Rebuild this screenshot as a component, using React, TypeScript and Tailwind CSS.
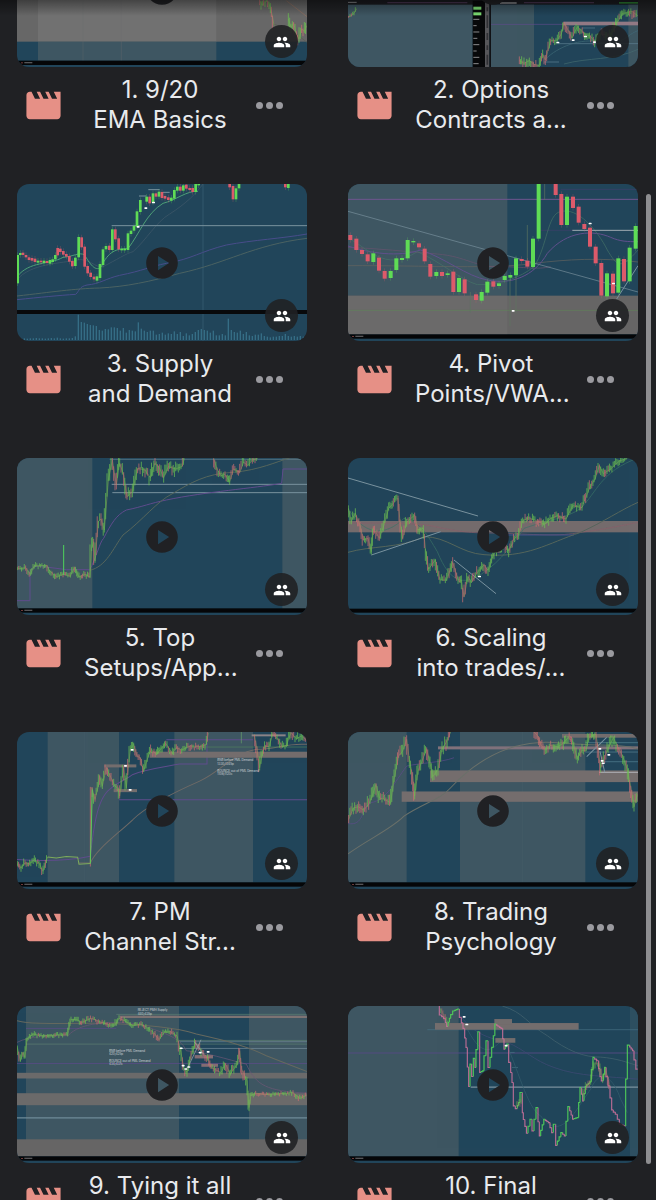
import type { ReactNode } from "react";
import { MdMovie, MdPeople, MdPlayCircle } from "react-icons/md";

const UP = "#5fdc55";
const DOWN = "#dc5a6a";
const SLATE = "#3e5662";
const GRAY = "#6b6a6a";
const ZONE = "#746d6d";
const PURPLE = "#5f4c8c";
const OLIVE = "#56665c";
const PALE = "#7a929e";

type Point = [number, number];
// x, top, bottom, direction
type Candle = [number, number, number, "u" | "d"];

const Box = ({ x, y, w, h, fill = SLATE, o = 1 }: { x: number; y: number; w: number; h: number; fill?: string; o?: number }) => (
  <rect x={x} y={y} width={w} height={h} fill={fill} opacity={o} />
);

const Curve = ({ d, c = OLIVE, w = 2 }: { d: string; c?: string; w?: number }) => (
  <path d={d} fill="none" stroke={c} strokeWidth={w} />
);

const Candles = ({ data, width }: { data: Candle[]; width: number }) => (
  <g>
    {data.map(([x, top, bottom, dir]) => (
      <g key={x} fill={dir === "u" ? UP : DOWN}>
        <rect x={x - 1} y={top - 8} width={2} height={bottom - top + 16} opacity={0.35} />
        <rect x={x - width / 2} y={top} width={width} height={bottom - top} />
      </g>
    ))}
  </g>
);

// Dense price action: short bars scattered around a polyline
const Price = ({ points, amp = 10, step = 4, o = 0.85 }: { points: Point[]; amp?: number; step?: number; o?: number }) => {
  let seed = points[0][0] * 7 + 13;
  const rand = () => {
    seed = (seed * 9301 + 49297) % 233280;
    return seed / 233280;
  };
  let up = "";
  let down = "";
  for (let i = 1; i < points.length; i++) {
    const [x0, y0] = points[i - 1];
    const [x1, y1] = points[i];
    const n = Math.max(1, Math.round((x1 - x0) / step));
    for (let k = 0; k < n; k++) {
      const x = x0 + ((x1 - x0) * k) / n;
      const a = y0 + ((y1 - y0) * k) / n;
      const b = y0 + ((y1 - y0) * (k + 1)) / n;
      const j = (rand() - 0.5) * amp;
      const top = Math.min(a, b) + j - amp * (0.3 + rand() * 0.5);
      const bottom = Math.max(a, b) + j + amp * (0.3 + rand() * 0.5);
      const bar = `M${x.toFixed(1)} ${top.toFixed(1)}V${bottom.toFixed(1)}`;
      if (rand() < (b <= a ? 0.78 : 0.4)) up += bar;
      else down += bar;
    }
  }
  const line = points.map((p) => p.join(" ")).join("L");
  return (
    <g fill="none" opacity={o}>
      <path d={`M${line}`} stroke="#8aa557" strokeWidth={2} />
      <path d={down} stroke="#cf6f72" strokeWidth={2.5} />
      <path d={up} stroke="#6cc552" strokeWidth={2.5} />
    </g>
  );
};

// Stair-stepped price line, green on the way up and pink on the way down
const Steps = ({ points }: { points: Point[] }) => {
  let up = "";
  let down = "";
  for (let i = 1; i < points.length; i++) {
    const [x0, y0] = points[i - 1];
    const [x1, y1] = points[i];
    const n = Math.max(1, Math.round((x1 - x0) / 5));
    for (let k = 0; k < n; k++) {
      const xa = x0 + ((x1 - x0) * k) / n;
      const xb = x0 + ((x1 - x0) * (k + 1)) / n;
      const ya = y0 + ((y1 - y0) * k) / n;
      const yb = y0 + ((y1 - y0) * (k + 1)) / n;
      const piece = `M${xa} ${ya}V${yb}H${xb}`;
      if (yb < ya) up += piece;
      else down += piece;
    }
  }
  return (
    <g fill="none" strokeWidth={3.5} opacity={0.9}>
      <path d={down} stroke="#c8709a" />
      <path d={up} stroke="#52d458" />
    </g>
  );
};

const Marks = ({ at }: { at: Point[] }) => (
  <g fill="#ffffff">
    {at.map(([x, y]) => (
      <rect key={`${x}-${y}`} x={x - 5} y={y - 3} width={9} height={5} rx={2} />
    ))}
  </g>
);

// Black time axis at the foot of a chart
const Axis = ({ x, y }: { x: number; y: number }) => (
  <g>
    <rect x={x} y={y} width={870} height={13} fill="#050608" />
    <rect x={x + 12} y={y + 5} width={6} height={3} fill="#6d3a3a" />
    <rect x={x + 22} y={y + 4} width={24} height={4} fill="#77777a" opacity={0.7} />
  </g>
);

const Note = ({ x, y, lines }: { x: number; y: number; lines: string[] }) => (
  <text x={x} y={y} fill="#e8eaed" fontSize={9} opacity={0.8}>
    {lines.map((line, i) => (
      <tspan key={line} x={x} dy={i === 0 ? 0 : 10}>
        {line}
      </tspan>
    ))}
  </text>
);

const Chart = ({ box, children }: { box: string; children: ReactNode }) => (
  <svg viewBox={box} preserveAspectRatio="none" className="block size-full bg-[#21455a]" aria-hidden="true">
    {children}
  </svg>
);

const EmaChart = () => (
  <Chart box="52 -272 870 471">
    <Box x={52} y={-272} w={870} h={395} fill="#676767" />
    <Box x={115} y={-272} w={535} h={395} fill="#717171" />
    <Box x={115} y={123} w={535} h={57} />
    <Curve d="M250 0V180M365 0V180" c="#6b6e6f" w={1} />
    <Curve d="M860 0L922 48" c="#94705f" />
    <Curve d="M820 70C850 80 880 90 922 125" c="#5b5f52" />
    <Price points={[[780, 0], [788, 14], [796, 5], [804, 0], [812, 20], [818, 45], [823, 75]]} amp={14} />
    <Price points={[[866, 55], [874, 80], [882, 68], [890, 100], [898, 115], [906, 85], [914, 92], [921, 75]]} amp={22} />
    <Axis x={52} y={180} />
  </Chart>
);

const OptionsChart = () => (
  <Chart box="62 -272 870 471">
    <Box x={62} y={-272} w={374} h={471} />
    <Box x={62} y={-272} w={870} h={284} fill="#1a1b20" />
    <Curve d="M62 5H88" c="#88898c" w={3} />
    <Curve d="M180 6H420M590 6H800" c="#47344f" w={4} />
    <Curve d="M518 7H568" c="#c9cacc" w={3} />
    <Price points={[[64, 48], [72, 46], [80, 38], [88, 24]]} amp={6} />
    <Box x={436} y={0} w={37} h={199} fill="#07080a" />
    <Box x={438} y={18} w={24} h={9} fill="#7bdc72" />
    <Box x={438} y={35} w={24} h={9} fill="#7bdc72" />
    <Curve d="M438 56H456M438 75H448M438 94H456M438 113H450M438 132H456M438 151H448M438 170H456M438 189H454" c="#8a8a8c" w={3} />
    <Box x={473} y={0} w={13} h={199} fill="#56565a" />
    <Curve d="M480 20V32M480 44V82M480 97V118M480 134V148M480 162V192" c="#303035" w={5} />
    <Box x={486} y={0} w={5} h={199} fill="#111216" />
    <Box x={491} y={12} w={129} h={187} />
    <Box x={903} y={12} w={29} h={187} />
    <Box x={875} y={4} w={57} h={5} fill="#2a7a31" />
    <Curve d="M491 71H932" c={PURPLE} />
    <Box x={708} y={63} w={224} h={11} fill="#927984" />
    <Curve d="M690 129H932M650 184H695M765 82H803" c="#5f8494" />
    <Curve d="M655 175C690 140 760 110 820 125S900 100 932 90" c="#426c79" />
    <Curve d="M710 190C780 170 860 180 932 146" c="#476c70" />
    <Price points={[[576, 180], [590, 188], [606, 180], [622, 192], [636, 194], [646, 160], [654, 178], [670, 120], [690, 118], [702, 100], [710, 68], [722, 88], [734, 112], [750, 78], [772, 100], [790, 108], [802, 122], [822, 100], [850, 105], [868, 68], [886, 38], [900, 36], [914, 32], [931, 45]]} amp={16} />
    <Marks at={[[692, 126], [738, 119], [775, 108], [802, 125]]} />
  </Chart>
);

const supplyCandles: Candle[] = [
  [54, 255, 340, "u"], [62, 249, 255, "u"], [70, 248, 255, "d"], [79, 255, 262, "d"], [88, 262, 270, "d"], [97, 264, 272, "d"],
  [106, 266, 276, "d"], [115, 272, 278, "u"], [124, 272, 277, "d"], [133, 272, 279, "u"], [142, 273, 279, "d"], [151, 270, 281, "u"],
  [159, 268, 276, "u"], [167, 255, 268, "u"], [174, 234, 256, "d"], [182, 236, 246, "d"], [191, 243, 254, "d"], [200, 252, 260, "d"],
  [209, 258, 275, "d"], [218, 273, 289, "d"], [227, 263, 288, "u"], [237, 201, 262, "u"], [246, 202, 232, "d"], [255, 230, 290, "d"],
  [264, 288, 310, "d"], [273, 308, 321, "d"], [283, 320, 328, "d"], [292, 319, 332, "u"], [301, 282, 324, "u"], [310, 238, 285, "u"],
  [319, 228, 238, "u"], [329, 227, 240, "d"], [338, 178, 240, "u"], [347, 178, 208, "d"], [357, 205, 238, "d"], [366, 236, 241, "u"],
  [375, 236, 241, "u"], [385, 190, 240, "u"], [394, 182, 192, "u"], [403, 168, 182, "u"], [412, 124, 170, "u"], [422, 90, 126, "u"],
  [441, 80, 95, "u"], [450, 80, 100, "d"], [460, 70, 98, "u"], [469, 70, 80, "d"], [478, 65, 80, "u"], [487, 66, 84, "d"],
  [496, 78, 86, "d"], [506, 82, 90, "d"], [515, 83, 92, "u"], [524, 60, 86, "u"], [533, 50, 62, "u"], [542, 50, 62, "d"],
  [551, 46, 62, "u"], [560, 44, 56, "d"], [570, 54, 60, "d"], [579, 54, 66, "d"], [588, 42, 66, "u"], [597, 40, 46, "u"],
  [690, 42, 52, "d"], [700, 48, 88, "d"], [709, 55, 88, "u"], [718, 40, 55, "u"], [857, 40, 52, "d"], [866, 42, 54, "u"],
];

const volumes = [
  4, 4, 5, 4, 5, 5, 6, 5, 5, 4, 5, 6, 5, 7, 5, 4, 5, 5, 6, 11, 76, 54, 52, 48, 45, 44, 42, 30, 28, 33, 32, 38, 38, 36, 28, 36, 22,
  30, 28, 26, 53, 34, 28, 24, 28, 28, 16, 18, 22, 16, 20, 18, 26, 18, 24, 12, 20, 14, 18, 24, 30, 33, 30, 28, 22, 28, 14, 14, 18,
  14, 64, 30, 24, 22, 28, 18, 24, 14, 12, 16, 16, 20, 12, 10, 8, 10, 10, 12, 12, 18, 12, 10, 12, 10, 12, 10,
];

const SupplyChart = () => (
  <Chart box="52 42 870 471">
    <Curve d="M610 42V512" c="#3b6277" />
    <g fill="#356d85">
      {volumes.map((v, i) => (
        <rect key={i} x={54 + i * 9} y={510 - v} width={4} height={v} />
      ))}
    </g>
    <Curve d="M52 389C120 382 180 376 228 373C240 362 238 350 262 345C300 342 320 325 360 316C430 302 450 290 500 280C580 266 600 245 680 225C760 210 850 205 922 192" c="#484d8a" w={3} />
    <Curve d="M52 378C160 366 220 356 300 354C380 350 450 335 540 310C680 280 760 225 922 205" c="#4b6262" w={3} />
    <Curve d="M52 330C90 280 190 280 230 270C270 262 285 295 310 290C350 270 380 250 400 245C440 210 470 155 510 132C560 100 590 70 610 42" c="#435a6b" />
    <Curve d="M52 320C90 272 150 285 190 262C220 260 240 245 255 255C275 290 290 305 305 290C325 245 350 235 385 236C420 190 440 130 490 100C530 90 560 62 595 64" c="#4e9f77" w={3} />
    <Curve d="M336 167H922" c={PALE} w={3} />
    <Curve d="M418 78H440M446 59H480M490 67H510" c={PALE} w={3} />
    <Candles data={supplyCandles} width={8} />
    <Marks at={[[439, 115], [462, 98], [416, 171]]} />
    <Box x={52} y={420} w={870} h={12} fill="#08090b" />
  </Chart>
);

const pivotCandles: Candle[] = [
  [69, 195, 210, "d"], [87, 206, 240, "d"], [104, 240, 252, "d"], [121, 253, 274, "d"], [138, 250, 276, "u"], [155, 263, 302, "d"],
  [172, 303, 326, "d"], [190, 303, 324, "u"], [207, 265, 300, "u"], [224, 264, 270, "u"], [241, 210, 265, "u"], [258, 213, 217, "u"],
  [275, 220, 232, "d"], [292, 236, 274, "d"], [309, 282, 320, "d"], [327, 306, 318, "u"], [344, 306, 318, "d"], [361, 310, 315, "u"],
  [378, 305, 366, "d"], [395, 324, 366, "u"], [412, 328, 370, "d"], [446, 373, 390, "d"], [463, 366, 392, "u"], [480, 335, 368, "u"],
  [498, 334, 350, "d"], [515, 340, 348, "u"], [532, 318, 330, "u"], [549, 315, 323, "u"], [566, 265, 316, "u"], [583, 267, 273, "d"],
  [600, 272, 290, "d"], [617, 206, 291, "u"], [634, 36, 206, "u"], [685, 36, 75, "d"], [702, 72, 165, "d"], [719, 80, 165, "u"],
  [737, 80, 114, "d"], [754, 110, 158, "d"], [771, 162, 177, "d"], [788, 173, 230, "d"], [805, 230, 280, "d"], [822, 279, 377, "d"],
  [839, 310, 379, "u"], [857, 311, 370, "d"], [873, 265, 368, "u"], [890, 267, 334, "d"], [907, 233, 334, "u"], [925, 168, 236, "u"],
];

const PivotChart = () => (
  <Chart box="62 42 870 471">
    <Box x={62} y={42} w={478} h={335} />
    <Box x={62} y={377} w={870} h={116} fill="#666565" />
    <Box x={62} y={377} w={478} h={116} fill={GRAY} />
    <Curve d="M62 88H932" c="#6f5690" w={3} />
    <Curve d="M700 58H932M640 181H740" c="#3f3f6c" />
    <Curve d="M62 421H932" c="#5f8458" />
    <Curve d="M62 287C300 286 500 298 620 280C720 268 820 262 932 276" c="#66655f" />
    <Curve d="M62 232C150 235 240 245 330 252C420 260 440 292 520 290C590 290 630 300 670 290" c="#6a5370" />
    <Curve d="M62 228C130 250 210 262 280 240C350 262 420 320 480 330C550 345 620 320 660 250C720 180 800 180 850 202C880 215 900 215 932 215" c="#60508c" w={3} />
    <Curve d="M62 205C120 230 170 310 270 245C340 275 400 330 450 344C520 345 580 322 620 290C660 230 660 130 700 125C750 110 810 180 840 240C870 290 880 300 932 240" c="#477468" />
    <Curve d="M62 124L932 366" c={PALE} />
    <Curve d="M868 387L932 287" c={PALE} w={3} />
    <Curve d="M735 181H932" c="#a0abb3" w={3} />
    <Curve d="M548 320V468M566 316V430M429 366V428M652 42V90M600 165V270" c="#5d7560" />
    <Candles data={pivotCandles} width={12} />
    <Marks at={[[789, 161], [859, 341], [558, 423]]} />
    <Axis x={62} y={493} />
  </Chart>
);

const SetupsChart = () => (
  <Chart box="52 39 870 471">
    <Box x={52} y={39} w={226} h={452} />
    <Box x={848} y={39} w={74} h={452} />
    <Curve d="M330 43H922" c="#668390" />
    <Curve d="M336 118H922M338 143H922" c={PALE} w={3} />
    <Curve d="M52 467H91V378L104 364L140 366L200 374H270C290 340 300 290 312 280C335 235 350 210 380 195C430 185 450 175 500 165C620 140 760 130 846 115L850 72H922" c={PURPLE} w={3} />
    <Curve d="M270 376C320 365 340 310 370 270C430 225 470 170 520 145C570 115 620 85 700 82C780 75 830 50 870 39" c={OLIVE} w={3} />
    <Price points={[[53, 372], [78, 368], [92, 388], [104, 362], [142, 362], [150, 378], [172, 396], [190, 388], [212, 394], [224, 368], [238, 396], [256, 388], [271, 396]]} amp={10} />
    <Price points={[[271, 396], [276, 310], [282, 290], [286, 348], [296, 230], [304, 222], [314, 255], [326, 105], [338, 45], [350, 120], [360, 55], [372, 90], [382, 155], [398, 140], [414, 70], [436, 75], [452, 98], [466, 55], [480, 70], [492, 98], [506, 65], [528, 72], [548, 64], [554, 40]]} amp={20} />
    <Price points={[[642, 40], [652, 72], [664, 92], [676, 88], [690, 110], [702, 72], [720, 82], [732, 52], [745, 62], [758, 45], [774, 40]]} amp={14} />
    <Curve d="M192 300V390" c="#4fd45c" w={3} />
    <Axis x={52} y={490} />
  </Chart>
);

const ScalingChart = () => (
  <Chart box="62 39 870 471">
    <Box x={62} y={228} w={870} h={34} fill="#756b6d" />
    <Curve d="M62 234C160 235 240 232 310 242C400 262 430 264 500 264C620 268 700 275 760 262C840 252 890 240 932 232" c="#8a5f69" />
    <Curve d="M540 270H740" c="#46508a" w={3} />
    <Curve d="M62 322C130 302 220 310 290 275C360 275 400 325 470 329C600 340 660 295 760 262C830 230 880 195 932 172" c={OLIVE} w={3} />
    <Curve d="M62 190C120 290 190 260 230 220C280 230 300 270 330 320C370 420 410 410 440 400C500 370 550 310 590 250C660 225 720 220 760 190C810 140 820 80 932 39" c="#3d7466" />
    <Curve d="M62 99L452 213M132 330L340 260M380 345L506 446" c={PALE} w={3} />
    <Price points={[[63, 190], [72, 230], [84, 205], [98, 240], [108, 285], [122, 280], [132, 320], [138, 248], [156, 280], [172, 235], [184, 190], [198, 175], [212, 160], [218, 230], [226, 280], [238, 232], [262, 210], [272, 255], [288, 250], [294, 310], [304, 372], [324, 345], [338, 405], [358, 405], [376, 352], [388, 390], [396, 412], [402, 405], [410, 455], [422, 395], [432, 412], [452, 380], [470, 360], [482, 376], [500, 325], [530, 300], [544, 318], [562, 280], [574, 270], [586, 228], [604, 218], [634, 230], [652, 238], [668, 222], [690, 212], [716, 222], [736, 182], [764, 188], [786, 130], [804, 100], [816, 62], [828, 86], [850, 72], [876, 48], [900, 40]]} amp={15} />
    <Marks at={[[457, 395]]} />
    <Box x={62} y={491} w={870} h={12} fill="#050608" />
  </Chart>
);

const ChannelChart = () => (
  <Chart box="52 38 870 470">
    <Box x={144} y={38} w={214} h={450} />
    <Box x={524} y={38} w={236} h={450} />
    <Curve d="M255 38V488M640 38V488" c="#465e69" w={1} />
    <Curve d="M500 61H760M358 241H922" c={PURPLE} w={3} />
    <Curve d="M52 420C120 425 200 425 272 410C280 340 290 240 330 210C350 190 380 180 400 165C440 150 480 145 540 134H622V70" c={PURPLE} w={3} />
    <Curve d="M236 430H272C290 390 340 355 400 300C440 260 520 220 600 185C660 160 700 100 770 90C830 90 860 70 922 75" c="#6f6a66" w={3} />
    <Curve d="M600 83H922" c="#52845f" />
    <Curve d="M725 38V72" c="#6aa56c" />
    <Box x={450} y={97} w={472} h={18} fill={ZONE} />
    <Box x={314} y={135} w={96} h={9} fill={ZONE} />
    <Box x={342} y={209} w={70} h={9} fill={ZONE} />
    <Box x={756} y={45} w={102} h={6} fill="#8a8387" />
    <Price points={[[53, 432], [64, 445], [76, 430], [90, 432], [104, 420], [118, 430], [130, 455], [144, 412]]} amp={12} />
    <Curve d="M144 412L170 415L200 411L234 413L238 434L272 432" c="#7dab5c" w={3} />
    <Price points={[[272, 432], [277, 205], [286, 240], [296, 200], [300, 170], [308, 200], [320, 145], [334, 175], [346, 200], [356, 208], [360, 230], [372, 145], [380, 205], [392, 90], [402, 75], [412, 110], [422, 115], [432, 155], [446, 110], [456, 90], [470, 105], [484, 88], [498, 72], [518, 102], [530, 85], [546, 92], [572, 80], [600, 82], [620, 76], [626, 40]]} amp={12} />
    <Curve d="M272 432L278 210" c="#5cc95a" w={3} />
    <Price points={[[764, 45], [772, 90], [780, 145], [788, 100], [798, 80], [808, 82], [820, 42], [836, 62], [848, 82], [860, 78], [874, 40], [890, 58], [905, 50], [921, 62]]} amp={14} />
    <Marks at={[[398, 92], [378, 140], [392, 212]]} />
    <Note x={653} y={126} lines={["BNB before PML Demand", "1330/1345p"]} />
    <Note x={653} y={157} lines={["BOUNCE out of PML Demand", "1108/1120c"]} />
    <Axis x={52} y={488} />
  </Chart>
);

const PsychologyChart = () => (
  <Chart box="62 38 870 470">
    <Box x={62} y={38} w={176} h={450} />
    <Box x={398} y={38} w={376} h={450} />
    <Curve d="M586 38V488" c="#4a616b" w={1} />
    <Box x={332} y={81} w={600} h={9} fill="#80717b" />
    <Box x={704} y={44} w={228} h={11} fill={ZONE} />
    <Box x={308} y={153} w={624} h={35} fill={ZONE} />
    <Box x={223} y={216} w={709} h={31} fill={ZONE} />
    <Curve d="M62 403C120 360 190 330 230 290C290 250 340 240 370 205C430 140 500 100 560 82C640 60 700 70 760 75C810 80 870 72 932 88" c="#6a7069" w={3} />
    <Curve d="M62 312C110 320 100 270 130 250C180 240 200 190 238 140C280 130 340 130 380 115" c={PURPLE} />
    <Curve d="M774 70H932M826 127H932M774 98H932" c="#5b8796" />
    <Curve d="M815 159H932" c="#a4a3a8" w={4} />
    <Curve d="M778 112L838 54M818 96L832 158" c={PALE} w={3} />
    <Price points={[[64, 300], [78, 265], [94, 262], [108, 272], [124, 255], [136, 225], [146, 195], [156, 235], [172, 240], [190, 250], [200, 180], [214, 110], [226, 95], [238, 60], [246, 120], [256, 170], [262, 230], [272, 155], [284, 125], [298, 90], [308, 130], [316, 172], [332, 150], [344, 90], [356, 70], [370, 38]]} amp={20} />
    <Price points={[[620, 38], [630, 48], [640, 75], [654, 92], [670, 78], [690, 82], [708, 72], [722, 55], [736, 65], [750, 118], [764, 92], [776, 95], [784, 55], [792, 50], [806, 45], [814, 100], [820, 145], [832, 112], [846, 80], [858, 55], [870, 80], [886, 110], [900, 150], [910, 200], [920, 262], [930, 225]]} amp={18} />
    <Marks at={[[818, 89], [845, 107], [825, 125], [828, 132]]} />
    <Axis x={62} y={488} />
  </Chart>
);

const TyingChart = () => (
  <Chart box="52 51 870 470">
    <Box x={79} y={51} w={459} h={450} />
    <Box x={748} y={51} w={174} h={450} />
    <Box x={52} y={251} w={870} h={17} fill={GRAY} />
    <Box x={52} y={312} w={870} h={36} fill={GRAY} />
    <Box x={52} y={450} w={870} h={51} fill="#666565" />
    <Curve d="M52 386H922" c="#6f8b99" w={4} />
    <Box x={360} y={80} w={562} h={7} fill="#7d7373" />
    <Curve d="M350 76H922M538 154H922M79 165H922" c="#5f8373" />
    <Curve d="M79 118H350M52 223H922" c={PURPLE} />
    <Curve d="M540 178H922M540 158H922" c={PALE} />
    <Curve d="M52 95C110 110 200 100 330 103C420 108 520 112 590 135C680 155 740 170 800 200L922 247" c="#66695f" w={3} />
    <Curve d="M52 160C90 140 150 140 205 140C240 100 330 95 420 105C480 130 540 140 560 185C620 190 680 210 740 225C770 290 800 305 922 312" c="#6f5877" />
    <Box x={585} y={198} w={55} h={10} fill="#846c73" />
    <Box x={605} y={224} w={50} h={9} fill="#846c73" />
    <Price points={[[53, 175], [62, 215], [70, 190], [76, 205], [82, 150], [100, 135], [128, 140], [170, 138], [204, 138], [214, 92], [232, 92], [246, 100], [276, 88], [300, 98], [330, 108], [346, 108], [358, 88], [374, 95], [400, 110], [424, 105], [446, 118], [462, 130], [478, 152], [494, 130], [512, 128], [532, 140]]} amp={9} />
    <Price points={[[532, 140], [544, 190], [552, 235], [562, 250], [574, 200], [588, 160], [600, 175], [612, 195], [624, 205], [634, 235], [648, 242], [664, 250], [678, 225], [692, 255], [706, 235], [714, 222], [720, 185], [726, 240], [742, 275], [748, 355], [754, 318]]} amp={14} />
    <Price points={[[754, 318], [768, 312], [800, 316], [840, 314], [880, 310], [900, 328], [921, 318]]} amp={8} />
    <Curve d="M564 236L604 152M584 158L612 196" c="#9aa9b1" />
    <Marks at={[[545, 178], [602, 191], [626, 189], [551, 230], [559, 240], [568, 234]]} />
    <Note x={414} y={67} lines={["REJECT PMH Supply", "440/435p"]} />
    <Note x={328} y={188} lines={["BNB before PML Demand", "420/425p"]} />
    <Note x={328} y={219} lines={["BOUNCE out of PML Demand", "434/437c"]} />
    <Axis x={52} y={501} />
  </Chart>
);

const FinalChart = () => (
  <Chart box="62 51 870 470">
    <Box x={62} y={51} w={332} h={450} />
    <Box x={908} y={51} w={24} h={450} fill="#2e4f61" />
    <Curve d="M62 192H932" c="#534a80" w={3} />
    <Curve d="M300 122H932M548 190H562M554 235H572" c="#497485" />
    <Curve d="M430 294H932" c={PALE} w={4} />
    <Curve d="M525 51C590 70 600 105 660 140C720 185 770 205 820 204C870 208 900 220 932 230" c="#486872" />
    <Curve d="M400 80C440 140 500 150 540 160C590 180 620 215 680 235C750 262 850 262 932 270" c="#434b78" />
    <Curve d="M410 100C470 230 500 170 530 150C570 230 600 360 640 380C700 460 740 370 790 300C820 230 860 270 880 330L900 370" c="#37616f" />
    <Box x={323} y={102} w={431} h={20} fill={ZONE} />
    <Box x={501} y={90} w={53} h={15} fill={ZONE} />
    <Box x={504} y={147} w={60} h={14} fill={ZONE} />
    <Steps points={[[336, 51], [343, 78], [354, 88], [362, 112], [370, 88], [382, 66], [396, 60], [402, 85], [412, 118], [420, 175], [428, 292], [433, 225], [438, 262], [443, 208], [446, 235], [457, 128], [461, 250], [470, 245], [482, 155], [488, 235], [498, 175], [507, 105], [526, 118], [534, 180], [544, 165], [550, 220], [558, 280], [564, 350], [570, 358], [578, 340], [585, 310], [588, 370], [602, 432], [614, 390], [620, 425], [632, 355], [640, 440], [654, 390], [668, 400], [678, 430], [685, 405], [690, 468], [706, 430], [716, 440], [727, 352], [740, 390], [754, 385], [762, 295], [770, 335], [778, 292], [792, 278], [802, 205], [814, 215], [822, 262], [828, 275], [836, 235], [848, 290], [858, 362], [870, 375], [882, 405], [895, 410], [900, 270], [907, 168], [920, 185], [931, 240]]} />
    <Price points={[[340, 60], [350, 80], [362, 100]]} amp={10} o={0.6} />
    <Price points={[[568, 345], [578, 345], [586, 325]]} amp={14} o={0.5} />
    <Price points={[[766, 315], [778, 290], [790, 280], [800, 225], [814, 220], [826, 270], [836, 245], [848, 290]]} amp={14} o={0.6} />
    <Marks at={[[411, 84], [419, 107], [537, 170]]} />
    <Axis x={62} y={501} />
  </Chart>
);

const videos = [
  { title: ["1. 9/20", "EMA Basics"], Preview: EmaChart },
  { title: ["2. Options", "Contracts a..."], Preview: OptionsChart },
  { title: ["3. Supply", "and Demand"], Preview: SupplyChart },
  { title: ["4. Pivot", "Points/VWA..."], Preview: PivotChart },
  { title: ["5. Top", "Setups/App..."], Preview: SetupsChart },
  { title: ["6. Scaling", "into trades/..."], Preview: ScalingChart },
  { title: ["7. PM", "Channel Str..."], Preview: ChannelChart },
  { title: ["8. Trading", "Psychology"], Preview: PsychologyChart },
  { title: ["9. Tying it all"], Preview: TyingChart },
  { title: ["10. Final"], Preview: FinalChart },
];

const VideoCard = ({ title, Preview }: { title: string[]; Preview: () => ReactNode }) => (
  <article>
    {/* Thumbnail */}
    <button
      type="button"
      aria-label={`Play ${title.join(" ")}`}
      className="relative block aspect-[290/157] w-full overflow-hidden rounded-xl"
    >
      <Preview />
      <span className="absolute inset-0 flex items-center justify-center">
        <MdPlayCircle className="size-[38px] text-[#202124]" />
      </span>
      <span className="absolute right-[9px] bottom-[9px] flex size-[33px] items-center justify-center rounded-full bg-[#202124]/90">
        <MdPeople className="size-[18px] text-white" />
      </span>
    </button>

    {/* Title row */}
    <div className="mt-2 flex h-[60px] items-center gap-5 pr-6 pl-1.5">
      <MdMovie className="size-[41px] shrink-0 text-[#e69086]" />
      <h2 className="min-w-0 flex-1 self-start text-center text-[24px] leading-[30px] whitespace-nowrap text-[#e8eaed]">
        {title.map((line) => (
          <span key={line} className="block">
            {line}
          </span>
        ))}
      </h2>
      <button type="button" aria-label="More actions" className="flex shrink-0 gap-[3px]">
        <span className="size-[7px] rounded-full bg-[#9a9a9f]" />
        <span className="size-[7px] rounded-full bg-[#9a9a9f]" />
        <span className="size-[7px] rounded-full bg-[#9a9a9f]" />
      </button>
    </div>
  </article>
);

export default function App() {
  return (
    <main className="relative h-screen overflow-hidden bg-[#202124] font-['Inter',sans-serif]">
      {/* List, part way through its scroll */}
      <div className="-mt-[90px] grid grid-cols-2 gap-x-[41px] gap-y-[49px] pr-[18px] pl-[17px]">
        {videos.map((video) => (
          <VideoCard key={video.title[0]} {...video} />
        ))}
      </div>

      {/* Shadow under the header */}
      <div className="pointer-events-none absolute inset-x-0 top-0 h-4 bg-gradient-to-b from-black/40 to-transparent" />

      {/* Scroll indicator */}
      <div className="absolute top-[194px] right-[5px] bottom-9 w-[5px] rounded-full bg-[#8e8e91]" />
    </main>
  );
}
